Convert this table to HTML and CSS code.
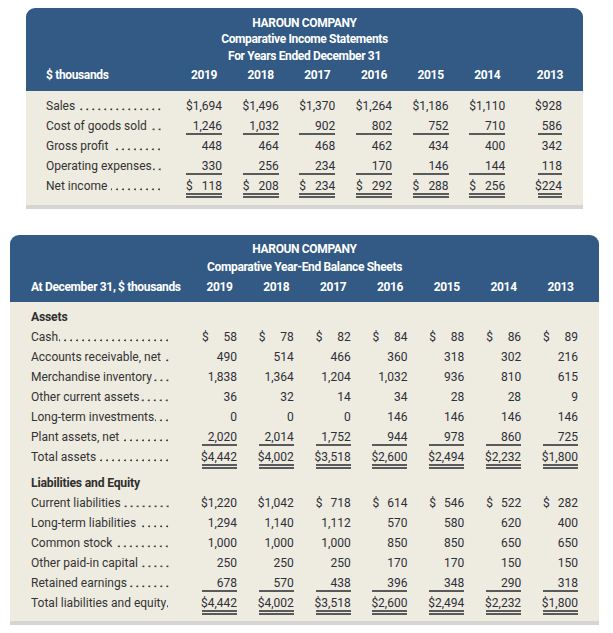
FILE: index.html
```html
<!DOCTYPE html>
<html>
<head>
<meta charset="utf-8">
<link rel="stylesheet" href="styles.css">
</head>
<body>
<div class="panel panel-top">
  <div class="head head-top">
    <div class="title">HAROUN COMPANY</div>
    <div class="title">Comparative Income Statements</div>
    <div class="title">For Years Ended December 31</div>
    <div class="grid grid-top colhead">
      <div class="hl">$ thousands</div>
      <div class="yr">2019</div><div class="yr">2018</div><div class="yr">2017</div><div class="yr">2016</div><div class="yr">2015</div><div class="yr">2014</div><div class="yr n24">2013</div>
    </div>
  </div>
  <div class="body body-top">
    <div class="grid grid-top rows">
      <div class="lab"><span>Sales</span><span class="dots"></span></div>
      <div class="num">$1,694</div><div class="num">$1,496</div><div class="num">$1,370</div><div class="num">$1,264</div><div class="num">$1,186</div><div class="num">$1,110</div><div class="num n24">$928</div>

      <div class="lab"><span>Cost of goods sold</span><span class="dots"></span></div>
      <div class="num u">1,246</div><div class="num u">1,032</div><div class="num u">902</div><div class="num u">802</div><div class="num u">752</div><div class="num u">710</div><div class="num u n24">586</div>

      <div class="lab"><span>Gross profit</span><span class="dots"></span></div>
      <div class="num">448</div><div class="num">464</div><div class="num">468</div><div class="num">462</div><div class="num">434</div><div class="num">400</div><div class="num n24">342</div>

      <div class="lab"><span>Operating expenses</span><span class="dots tight"></span></div>
      <div class="num u">330</div><div class="num u">256</div><div class="num u">234</div><div class="num u">170</div><div class="num u">146</div><div class="num u">144</div><div class="num u n24">118</div>

      <div class="lab"><span>Net income</span><span class="dots"></span></div>
      <div class="num uu d"><span>$</span><span>118</span></div><div class="num uu d"><span>$</span><span>208</span></div><div class="num uu d"><span>$</span><span>234</span></div><div class="num uu d"><span>$</span><span>292</span></div><div class="num uu d"><span>$</span><span>288</span></div><div class="num uu d"><span>$</span><span>256</span></div><div class="num uu n24">$224</div>
    </div>
  </div>
</div>

<div class="panel panel-bottom">
  <div class="head head-bot">
    <div class="title">HAROUN COMPANY</div>
    <div class="title">Comparative Year-End Balance Sheets</div>
    <div class="grid grid-bot colhead">
      <div class="hl">At December 31, $ thousands</div>
      <div class="yr">2019</div><div class="yr">2018</div><div class="yr">2017</div><div class="yr">2016</div><div class="yr">2015</div><div class="yr">2014</div><div class="yr">2013</div>
    </div>
  </div>
  <div class="body body-bot">
    <div class="grid grid-bot rows">
      <div class="sec">Assets</div>

      <div class="lab"><span>Cash</span><span class="dots tight"></span></div>
      <div class="num d"><span>$</span><span>58</span></div><div class="num d"><span>$</span><span>78</span></div><div class="num d"><span>$</span><span>82</span></div><div class="num d"><span>$</span><span>84</span></div><div class="num d"><span>$</span><span>88</span></div><div class="num d"><span>$</span><span>86</span></div><div class="num d"><span>$</span><span>89</span></div>

      <div class="lab"><span>Accounts receivable, net</span><span class="dots"></span></div>
      <div class="num">490</div><div class="num">514</div><div class="num">466</div><div class="num">360</div><div class="num">318</div><div class="num">302</div><div class="num">216</div>

      <div class="lab"><span>Merchandise inventory</span><span class="dots tight"></span></div>
      <div class="num">1,838</div><div class="num">1,364</div><div class="num">1,204</div><div class="num">1,032</div><div class="num">936</div><div class="num">810</div><div class="num">615</div>

      <div class="lab"><span>Other current assets</span><span class="dots tight"></span></div>
      <div class="num">36</div><div class="num">32</div><div class="num">14</div><div class="num">34</div><div class="num">28</div><div class="num">28</div><div class="num">9</div>

      <div class="lab"><span>Long-term investments</span><span class="dots tight"></span></div>
      <div class="num">0</div><div class="num">0</div><div class="num">0</div><div class="num">146</div><div class="num">146</div><div class="num">146</div><div class="num">146</div>

      <div class="lab"><span>Plant assets, net</span><span class="dots"></span></div>
      <div class="num u">2,020</div><div class="num u">2,014</div><div class="num u">1,752</div><div class="num u">944</div><div class="num u">978</div><div class="num u">860</div><div class="num u">725</div>

      <div class="lab"><span>Total assets</span><span class="dots"></span></div>
      <div class="num uu">$4,442</div><div class="num uu">$4,002</div><div class="num uu">$3,518</div><div class="num uu">$2,600</div><div class="num uu">$2,494</div><div class="num uu">$2,232</div><div class="num uu">$1,800</div>
    </div>

    <div class="grid grid-bot rows">
      <div class="sec">Liabilities and Equity</div>

      <div class="lab"><span>Current liabilities</span><span class="dots tight"></span></div>
      <div class="num">$1,220</div><div class="num">$1,042</div><div class="num d"><span>$</span><span>718</span></div><div class="num d"><span>$</span><span>614</span></div><div class="num d"><span>$</span><span>546</span></div><div class="num d"><span>$</span><span>522</span></div><div class="num d"><span>$</span><span>282</span></div>

      <div class="lab"><span>Long-term liabilities</span><span class="dots"></span></div>
      <div class="num">1,294</div><div class="num">1,140</div><div class="num">1,112</div><div class="num">570</div><div class="num">580</div><div class="num">620</div><div class="num">400</div>

      <div class="lab"><span>Common stock</span><span class="dots"></span></div>
      <div class="num">1,000</div><div class="num">1,000</div><div class="num">1,000</div><div class="num">850</div><div class="num">850</div><div class="num">650</div><div class="num">650</div>

      <div class="lab"><span>Other paid-in capital</span><span class="dots tight"></span></div>
      <div class="num">250</div><div class="num">250</div><div class="num">250</div><div class="num">170</div><div class="num">170</div><div class="num">150</div><div class="num">150</div>

      <div class="lab"><span>Retained earnings</span><span class="dots tight"></span></div>
      <div class="num u">678</div><div class="num u">570</div><div class="num u">438</div><div class="num u">396</div><div class="num u">348</div><div class="num u">290</div><div class="num u">318</div>

      <div class="lab"><span>Total liabilities and equity</span><span class="dots tight"></span></div>
      <div class="num uu">$4,442</div><div class="num uu">$4,002</div><div class="num uu">$3,518</div><div class="num uu">$2,600</div><div class="num uu">$2,494</div><div class="num uu">$2,232</div><div class="num uu">$1,800</div>
    </div>
  </div>
</div>
</body>
</html>
```

FILE: styles.css
```css
body {
  margin: 0;
  background: #ffffff;
  font-family: Roboto, "Liberation Sans", sans-serif;
  font-size: 12px;
  color: #333333;
}

.panel-top {
  width: 557px;
  margin: 8px 0 0 26px;
}

.panel-bottom {
  width: 589px;
  margin: 26px 0 0 10px;
}

.head {
  background: #325a84;
  color: #ffffff;
  font-weight: 700;
  letter-spacing: -0.35px;
  border-radius: 9px 9px 0 0;
}

.head-top {
  padding: 6.5px 0 7px 0;
}

.head-top .title {
  line-height: 16.5px;
}

.head-bot {
  padding: 5px 0 6.5px 0;
}

.head-bot .title {
  line-height: 18px;
}

.title {
  text-align: center;
}

.grid {
  display: grid;
}

.grid-top {
  grid-template-columns: 119.33px repeat(7, 36px);
  column-gap: 20.67px;
  padding-left: 20px;
}

.grid-bot {
  grid-template-columns: 149.17px repeat(7, 35px);
  column-gap: 21.83px;
  padding-left: 21px;
}

.head-top .colhead {
  margin-top: 3px;
  line-height: 17px;
}

.head-bot .colhead {
  margin-top: 1.5px;
  line-height: 18px;
}

.hl {
  white-space: nowrap;
}

.yr {
  display: flex;
  justify-content: center;
  white-space: nowrap;
}

.n24 {
  width: 24px;
  justify-self: end;
}

.body {
  background: #eeebe0;
  border-bottom: 4px solid #d5d5d3;
}

.body-top {
  padding: 5px 0 9px 0;
}

.body-bot {
  padding: 5px 0 8px 0;
}

.rows {
  grid-auto-rows: 20px;
}

.rows + .rows {
  margin-top: 6px;
}

.sec {
  grid-column: 1 / -1;
  font-weight: 700;
  font-size: 12.2px;
  letter-spacing: -0.2px;
  line-height: 14px;
  padding-top: 3px;
  color: #2f2f2f;
}

.lab {
  display: flex;
  font-size: 12px;
  line-height: 14px;
  padding-top: 3px;
  white-space: nowrap;
}

.grid-top .lab {
  padding-right: 3px;
}

.grid-bot .lab {
  padding-right: 10px;
}

.dots {
  flex: 1;
  min-width: 0;
  margin-left: 4px;
  background-image: radial-gradient(circle at 1.2px 10.4px, #444444 0, #444444 0.7px, rgba(68, 68, 68, 0) 1.3px);
  background-size: 6px 14px;
  background-repeat: repeat-x;
  background-position: right -2px top 0;
}

.dots.tight {
  margin-left: 1px;
}

.num {
  display: flex;
  justify-content: flex-end;
  align-self: start;
  height: 14px;
  line-height: 14px;
  margin-top: 3px;
  white-space: nowrap;
  color: #2d2f38;
}

.num.d {
  justify-content: space-between;
}

.u {
  border-bottom: 2px solid #5a5a5a;
}

.uu {
  border-bottom: 5px double #5a5a5a;
}
```
